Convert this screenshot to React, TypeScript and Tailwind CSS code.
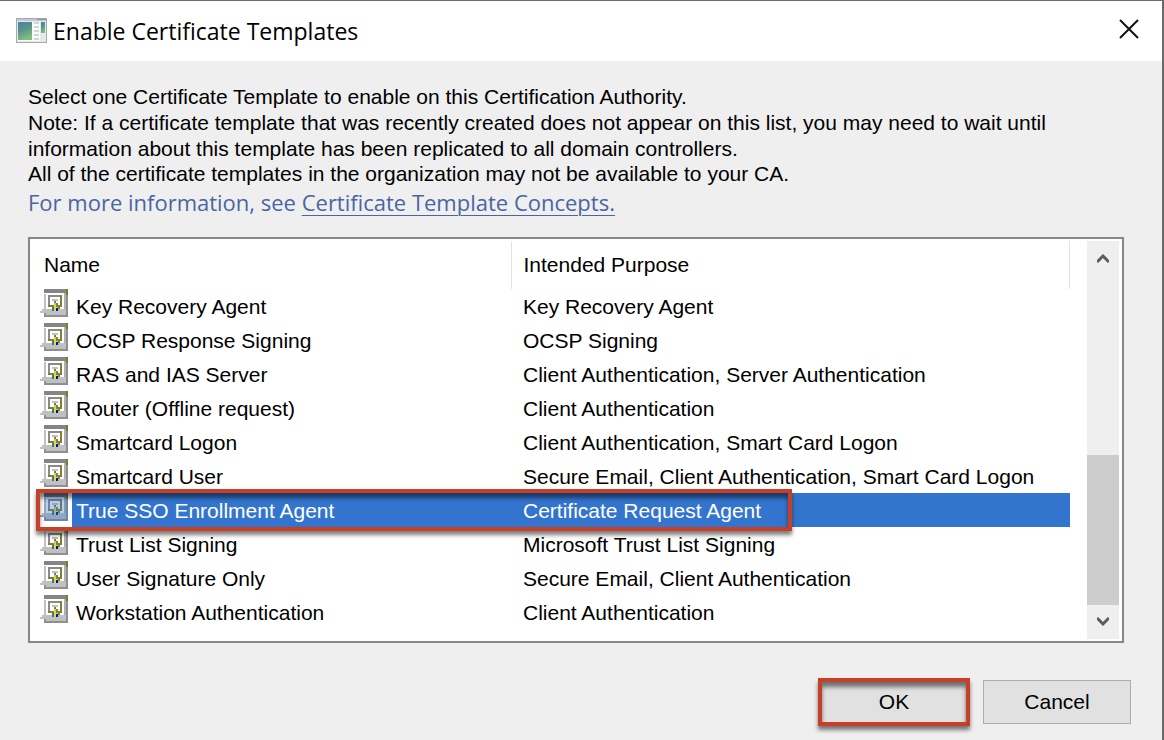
import React from 'react';

interface Template {
  name: string;
  purpose: string;
}

const TEMPLATES: Template[] = [
  { name: 'Key Recovery Agent', purpose: 'Key Recovery Agent' },
  { name: 'OCSP Response Signing', purpose: 'OCSP Signing' },
  { name: 'RAS and IAS Server', purpose: 'Client Authentication, Server Authentication' },
  { name: 'Router (Offline request)', purpose: 'Client Authentication' },
  { name: 'Smartcard Logon', purpose: 'Client Authentication, Smart Card Logon' },
  { name: 'Smartcard User', purpose: 'Secure Email, Client Authentication, Smart Card Logon' },
  { name: 'True SSO Enrollment Agent', purpose: 'Certificate Request Agent' },
  { name: 'Trust List Signing', purpose: 'Microsoft Trust List Signing' },
  { name: 'User Signature Only', purpose: 'Secure Email, Client Authentication' },
  { name: 'Workstation Authentication', purpose: 'Client Authentication' },
];

const SELECTED = 'True SSO Enrollment Agent';

const WindowIcon = () => (
  <svg width="32" height="26" viewBox="0 0 32 26" aria-hidden="true">
    <defs>
      <linearGradient id="pane" x1="0" y1="0" x2="0.3" y2="1">
        <stop offset="0" stopColor="#4d80a8" />
        <stop offset="0.5" stopColor="#58958c" />
        <stop offset="1" stopColor="#7fbd7c" />
      </linearGradient>
    </defs>
    <rect x="0.5" y="0.5" width="30" height="24" fill="#e6e9ec" stroke="#a3a9b0" />
    <path d="M1 1h29v2H1z" fill="#c5cad0" />
    <path d="M21 1h9v1h-9z" fill="#8e959d" />
    <path d="M2 4h15v19H2z" fill="#f6f8f9" />
    <path d="M2 4h14v18H2z" fill="url(#pane)" />
    <path d="M17 4h7v19h-7z" fill="#fafafa" />
    <path d="M18 5h5M18 9h5M18 13h5M18 17h5M18 21h5" stroke="#c3c7cb" strokeWidth="1.5" />
    <path d="M25 4h4v11h-4z" fill="url(#pane)" />
  </svg>
);

const TemplateIcon: React.FC<{ selected: boolean }> = ({ selected }) => (
  <svg width="28" height="28" viewBox="0 0 28 28" shapeRendering="crispEdges" aria-hidden="true">
    <path d="M6 4h20v16H6z" fill="#fff" />
    <path d="M4 0h22v4H4z" fill="#858585" />
    <path d="M26 4h2v24H4v-4h2v2h20z" fill="#8f8f8f" />
    <path d="M26 0h2v6h-2z" fill="#7d7d1e" />
    <path d="M24 4h2v16h-2z" fill="#b0b0b0" />
    <path d="M4 5h2v15H4z" fill="#c0c0c0" />
    <path d="M0 22h2v-2h24v6H6v-2H0z" fill="#c0c0c0" />
    {/* certificate frame */}
    <path d="M8 6h12v2H10v10H8z" fill="#8a8a8a" />
    <path d="M20 6h2v12h-4v-2h2z" fill="#808030" />
    <path d="M8 16h4v2H8z" fill="#808030" />
    <path d="M12 10h6v2h-6z" fill="#c0c0c0" />
    {/* seal and ribbons */}
    <path d="M14 12h2v2h2v2h2v4h-8v-4h2z" fill="#808030" />
    <path d="M14 14h2v2h-2z" fill="#c0c0c0" />
    <path d="M14 16h2v2h2v2h-2v2h-2v-2h-2v-2h2z" fill="#e4dc2c" />
    <path d="M12 18h2v4h-2z" fill="#2c8080" />
    <path d="M16 19h2v3h-2z" fill="#0000e0" />
    {selected && <path d="M4 0h24v28H4v-4H0v-2h4z" fill="#3375ce" fillOpacity="0.35" />}
  </svg>
);

const Highlight: React.FC<{ className: string }> = ({ className }) => (
  <span
    className={`pointer-events-none absolute z-10 border-4 border-[#c64027] shadow-[0_4px_4px_rgba(0,0,0,0.5),inset_0_5px_4px_rgba(0,0,0,0.5)] ${className}`}
  />
);

const ScrollButton: React.FC<{ label: string; d: string }> = ({ label, d }) => (
  <button aria-label={label} className="flex h-[34px] w-full items-center justify-center">
    <svg width="12" height="10" viewBox="0 0 12 10" fill="none" aria-hidden="true">
      <path d={d} stroke="#5c5c5c" strokeWidth="3" />
    </svg>
  </button>
);

const App: React.FC = () => {
  return (
    <div className="flex min-h-screen flex-col border-t border-r-2 border-t-[#6b6b6b] border-r-[#6b6b6b] bg-[#efefef] font-['Liberation_Sans',sans-serif] text-[21px] text-black">
      <header className="flex h-[60px] items-start justify-between bg-white pt-[15px] pr-5 pl-4">
        <div className="flex items-center gap-[5px]">
          <WindowIcon />
          <h1 className="font-['Open_Sans','Noto_Sans',sans-serif] text-[23px] leading-[30px]">Enable Certificate Templates</h1>
        </div>
        <button aria-label="Close" className="flex size-[26px] items-center justify-center">
          <svg width="22" height="22" viewBox="0 0 22 22" aria-hidden="true">
            <path d="M2 2l18 18M20 2L2 20" stroke="#111" strokeWidth="2" />
          </svg>
        </button>
      </header>

      <main className="flex flex-col pt-[23px] pr-[31px] pl-7">
        <div className="leading-[26px]">
          <p>Select one Certificate Template to enable on this Certification Authority.</p>
          <p className="max-w-[1060px]">
            Note: If a certificate template that was recently created does not appear on this list, you may need to wait until
            information about this template has been replicated to all domain controllers.
          </p>
          <p className="leading-6">All of the certificate templates in the organization may not be available to your CA.</p>
        </div>
        <p className="font-['Open_Sans','Noto_Sans',sans-serif] text-[22px] leading-[32px] text-[#4a65a3]">
          For more information, see{' '}
          <a href="#concepts" className="underline decoration-1 underline-offset-4">Certificate Template Concepts.</a>
        </p>

        <div className="mt-[19px] mr-[7px] flex border-2 border-[#828790] bg-white p-[2px]">
          <div className="min-w-0 flex-1 pr-[17px] pb-[10px] pl-2">
            <table className="w-full table-fixed border-collapse text-left">
              <thead>
                <tr className="h-12">
                  <th className="w-[471px] border-r border-[#e3e3e3] pl-1 font-normal">Name</th>
                  <th className="border-r border-[#e3e3e3] pl-3 font-normal">Intended Purpose</th>
                </tr>
              </thead>
              <tbody>
                {TEMPLATES.map((template) => {
                  const selected = template.name === SELECTED;
                  return (
                    <tr key={template.name} aria-selected={selected} className={`h-[34px] ${selected ? 'text-white' : ''}`}>
                      <td className="relative p-0">
                        <div className="flex">
                          <span className="w-8 shrink-0">
                            <TemplateIcon selected={selected} />
                          </span>
                          <span className={`h-[34px] flex-1 pt-[2px] pl-1 leading-8 ${selected ? 'bg-[#3375ce]' : ''}`}>{template.name}</span>
                        </div>
                        {selected && <Highlight className="-top-1 -left-1 h-[42px] w-[756px]" />}
                      </td>
                      <td className={`p-0 pt-[2px] pl-3 leading-8 ${selected ? 'bg-[#3375ce]' : ''}`}>{template.purpose}</td>
                    </tr>
                  );
                })}
              </tbody>
            </table>
          </div>
          <div className="mr-[1px] flex w-8 flex-col bg-[#efefef]">
            <ScrollButton label="Scroll up" d="M0 9l6-6 6 6" />
            <div className="flex flex-1 flex-col justify-end">
              <div className="h-[150px] bg-[#cdcdcd]" />
            </div>
            <ScrollButton label="Scroll down" d="M0 1l6 6 6-6" />
          </div>
        </div>

        <div className="mt-[37px] flex justify-end gap-[15px]">
          <button className="relative h-11 w-[148px] border-2 border-[#2f6fb5] bg-[#e1e1e1]">
            OK
            <Highlight className="-inset-1" />
          </button>
          <button className="h-11 w-[148px] border border-[#adadad] bg-[#e1e1e1]">Cancel</button>
        </div>
      </main>
    </div>
  );
};

export default App;
